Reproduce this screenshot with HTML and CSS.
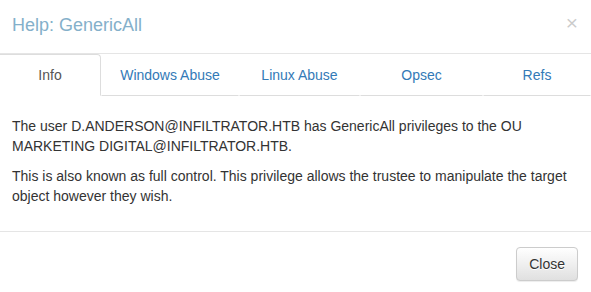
FILE: index.html
```html
<!DOCTYPE html>
<html lang="en">
<head>
    <meta charset="UTF-8">
    <meta name="viewport" content="width=device-width, initial-scale=1.0">
    <title>Help: GenericAll</title>
    <link rel="stylesheet" href="styles.css">
</head>
<body>
    <div class="modal-content">
        <div class="modal-header">
            <h4 class="modal-title">Help: GenericAll</h4>
            <button type="button" class="close" aria-label="Close">&times;</button>
        </div>

        <ul class="nav-tabs">
            <li class="active"><a href="#info">Info</a></li>
            <li><a href="#windows">Windows Abuse</a></li>
            <li><a href="#linux">Linux Abuse</a></li>
            <li><a href="#opsec">Opsec</a></li>
            <li><a href="#refs">Refs</a></li>
        </ul>

        <div class="modal-body">
            <p>The user D.ANDERSON@INFILTRATOR.HTB has GenericAll privileges to the OU MARKETING DIGITAL@INFILTRATOR.HTB.</p>
            <p>This is also known as full control. This privilege allows the trustee to manipulate the target object however they wish.</p>
        </div>

        <div class="modal-footer">
            <button type="button" class="btn">Close</button>
        </div>
    </div>
</body>
</html>
```

FILE: styles.css
```css
* {
    box-sizing: border-box;
}
body {
    margin: 0;
    font-family: "Liberation Sans", Arial, sans-serif;
    font-size: 14px;
    line-height: 20px;
    color: #333;
    background: #fff;
}
.modal-content {
    width: 591px;
    background: #fff;
}
.modal-header {
    display: flex;
    justify-content: space-between;
    align-items: flex-start;
    padding: 12px 13px 15px 12px;
    border-bottom: 1px solid #e5e5e5;
}
.modal-title {
    margin: 0;
    font-size: 18px;
    font-weight: 500;
    line-height: 26px;
    color: #84b0ca;
}
.close {
    padding: 0;
    border: 0;
    background: transparent;
    font-family: "Liberation Sans", Arial, sans-serif;
    font-size: 21px;
    font-weight: normal;
    line-height: 1;
    color: #000;
    opacity: .2;
    cursor: pointer;
}
.nav-tabs {
    display: grid;
    grid-template-columns: 101px 138px 121px 123px 1fr;
    margin: 0;
    padding: 0;
    list-style: none;
}
.nav-tabs a {
    display: block;
    padding: 10px 15px;
    text-align: center;
    text-decoration: none;
    color: #337ab7;
    border: 1px solid transparent;
    border-bottom-color: #ddd;
    border-radius: 4px 4px 0 0;
}
.nav-tabs .active a {
    color: #555;
    border-color: #ddd;
    border-bottom-color: #fff;
    border-left: 0;
    border-top-left-radius: 0;
}
.modal-body {
    padding: 20px 13px 15px 12px;
}
.modal-body p {
    margin: 0 0 10px;
}
.modal-footer {
    display: flex;
    justify-content: flex-end;
    padding: 15px 13px;
    border-top: 1px solid #e5e5e5;
}
.btn {
    padding: 6px 12px;
    font-family: "Liberation Sans", Arial, sans-serif;
    font-size: 14px;
    line-height: 20px;
    color: #333;
    text-shadow: 0 1px 0 #fff;
    background-image: linear-gradient(to bottom, #fff 0, #e0e0e0 100%);
    border: 1px solid #ccc;
    border-radius: 4px;
    box-shadow: inset 0 1px 0 rgba(255, 255, 255, .15), 0 1px 1px rgba(0, 0, 0, .075);
    cursor: pointer;
}
```
